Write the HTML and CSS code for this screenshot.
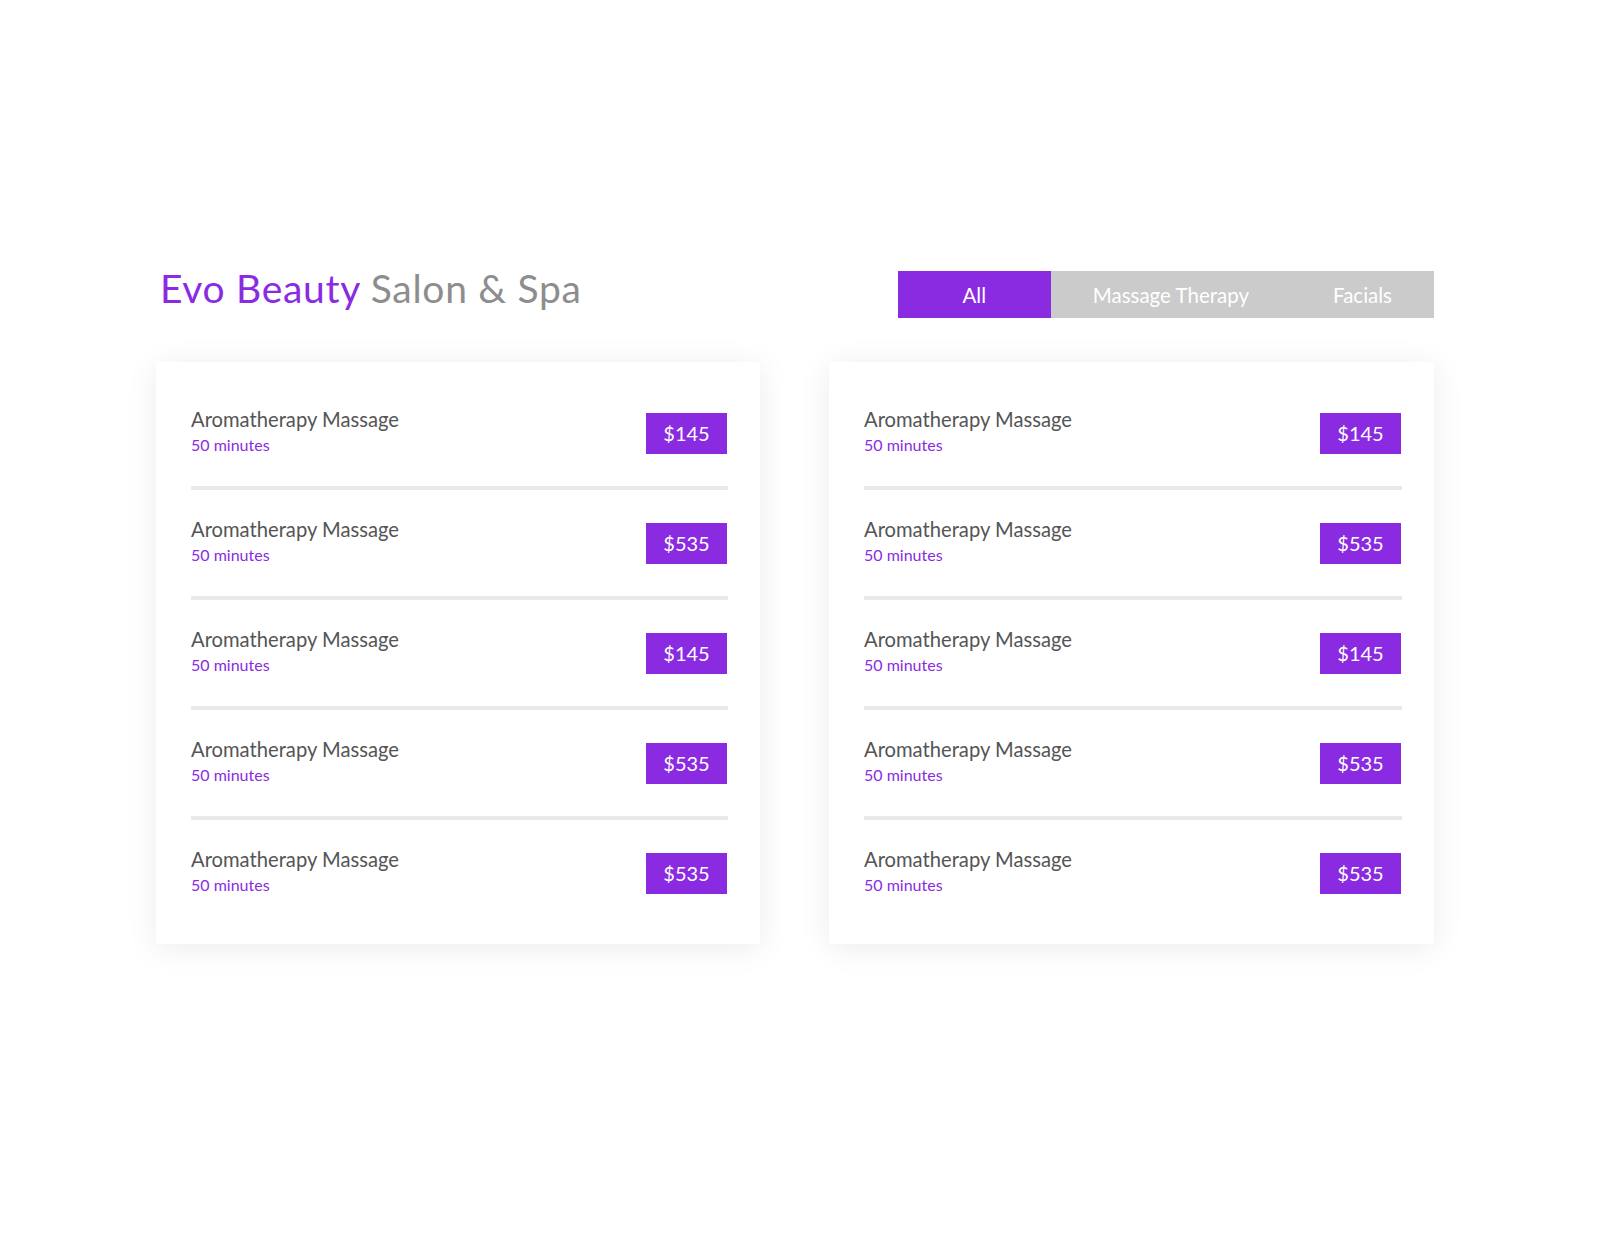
FILE: index.html
```html
<!DOCTYPE html>
<html lang="en">
<head>
<meta charset="utf-8">
<title>Evo Beauty Salon &amp; Spa</title>
<link rel="stylesheet" href="styles.css">
</head>
<body>
<div class="page">
  <header class="header">
    <h1 class="brand"><span class="brand-main">Evo Beauty</span> <span class="brand-sub">Salon &amp; Spa</span></h1>
    <nav class="tabs">
      <a class="tab tab-active">All</a>
      <a class="tab">Massage Therapy</a>
      <a class="tab">Facials</a>
    </nav>
  </header>
  <main class="cards">
    <section class="card">
      <div class="row"><div class="info"><div class="name">Aromatherapy Massage</div><div class="dur">50 minutes</div></div><div class="price">$145</div></div>
      <div class="row"><div class="info"><div class="name">Aromatherapy Massage</div><div class="dur">50 minutes</div></div><div class="price">$535</div></div>
      <div class="row"><div class="info"><div class="name">Aromatherapy Massage</div><div class="dur">50 minutes</div></div><div class="price">$145</div></div>
      <div class="row"><div class="info"><div class="name">Aromatherapy Massage</div><div class="dur">50 minutes</div></div><div class="price">$535</div></div>
      <div class="row"><div class="info"><div class="name">Aromatherapy Massage</div><div class="dur">50 minutes</div></div><div class="price">$535</div></div>
    </section>
    <section class="card">
      <div class="row"><div class="info"><div class="name">Aromatherapy Massage</div><div class="dur">50 minutes</div></div><div class="price">$145</div></div>
      <div class="row"><div class="info"><div class="name">Aromatherapy Massage</div><div class="dur">50 minutes</div></div><div class="price">$535</div></div>
      <div class="row"><div class="info"><div class="name">Aromatherapy Massage</div><div class="dur">50 minutes</div></div><div class="price">$145</div></div>
      <div class="row"><div class="info"><div class="name">Aromatherapy Massage</div><div class="dur">50 minutes</div></div><div class="price">$535</div></div>
      <div class="row"><div class="info"><div class="name">Aromatherapy Massage</div><div class="dur">50 minutes</div></div><div class="price">$535</div></div>
    </section>
  </main>
</div>
</body>
</html>
```

FILE: styles.css
```css
* { box-sizing: border-box; }
html, body { margin: 0; padding: 0; background: #ffffff; }
body {
  font-family: Lato, "Open Sans", "Liberation Sans", sans-serif;
  width: 1600px;
  height: 1260px;
}
.page {
  width: 1278px;
  margin-left: 156px;
  padding-top: 271px;
}
.header {
  display: flex;
  justify-content: space-between;
  align-items: flex-start;
  margin-bottom: 44px;
}
.brand {
  margin: -3px 0 0 4px;
  font-size: 39px;
  line-height: 40px;
  letter-spacing: 0.7px;
  font-weight: 400;
  white-space: nowrap;
}
.brand-main { color: #8a2be2; }
.brand-sub { color: #8d8d8d; }
.tabs {
  display: flex;
  background: #cbcbcb;
  height: 47px;
}
.tab {
  display: flex;
  align-items: center;
  justify-content: center;
  padding: 0 42px;
  color: #ffffff;
  font-size: 20.5px;
  text-decoration: none;
}
.tab-active {
  width: 153px;
  padding: 0;
  background: #8a2be2;
}
.cards {
  display: grid;
  grid-template-columns: 604px 605px;
  column-gap: 69px;
}
.card {
  background: #ffffff;
  box-shadow: 0 4px 30px rgba(0, 0, 0, 0.08);
  padding: 18px 32px 18px 35px;
}
.row {
  display: flex;
  justify-content: space-between;
  align-items: center;
  height: 110px;
  border-bottom: 4px solid #e9e9e9;
}
.row:last-child {
  height: 106px;
  border-bottom: none;
}
.info { display: flex; flex-direction: column; margin-top: -2px; }
.name {
  font-size: 20.2px;
  line-height: 20px;
  color: #555555;
}
.dur {
  margin-top: 6px;
  font-size: 16px;
  line-height: 20px;
  color: #8a2be2;
}
.price {
  width: 81px;
  height: 41px;
  margin-right: 1px;
  display: flex;
  align-items: center;
  justify-content: center;
  background: #8a2be2;
  color: #ffffff;
  font-size: 20px;
}
```
